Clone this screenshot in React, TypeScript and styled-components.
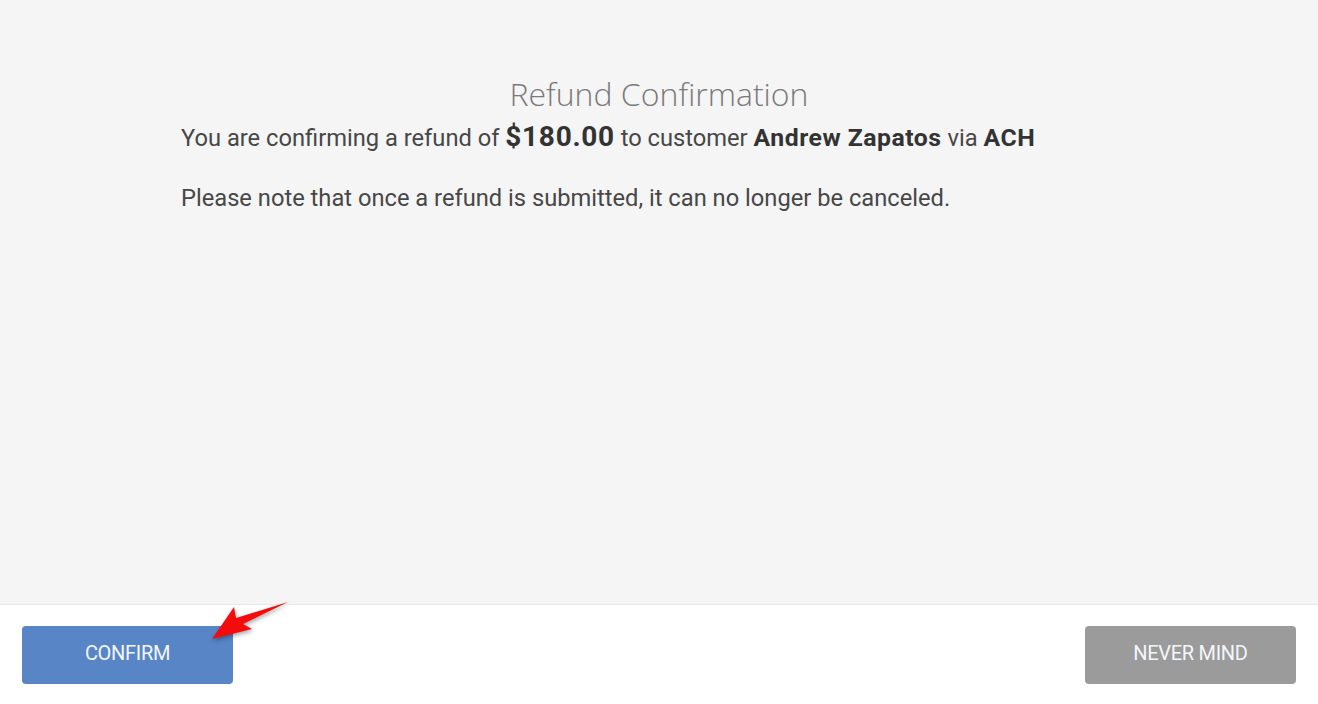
import React from "react";
import styled, { createGlobalStyle } from "styled-components";

const GlobalStyle = createGlobalStyle`
  html, body {
    margin: 0;
    padding: 0;
    background: #ffffff;
  }
  body {
    font-family: Roboto, "Open Sans", sans-serif;
  }
`;

export default function App() {
  return (
    <>
      <GlobalStyle />
      <Modal>
        <Body>
          <Title>Refund Confirmation</Title>
          <Text>
            You are confirming a refund of <Amount>$180.00</Amount> to customer{" "}
            <Strong>Andrew Zapatos</Strong> via <Strong>ACH</Strong>
          </Text>
          <Text $gap>
            Please note that once a refund is submitted, it can no longer be
            canceled.
          </Text>
        </Body>
        <Footer>
          <Button $color="#5785c6">CONFIRM</Button>
          <Button $color="#9b9b9b">NEVER MIND</Button>
          <Arrow viewBox="0 0 80 46" width="80" height="46">
            <polygon
              points="2,38 24,6 26,17 78,1 33,23 42,28"
              fill="#f40c0c"
            />
          </Arrow>
        </Footer>
      </Modal>
    </>
  );
}

const Modal = styled.div`
  display: flex;
  flex-direction: column;
  width: 1318px;
  height: 704px;
  overflow: hidden;
`;

const Body = styled.div`
  flex: 1;
  background: #f5f5f5;
  padding: 72px 181px 0;
  color: #444444;
`;

const Title = styled.h2`
  margin: 0;
  text-align: center;
  font-family: "Open Sans", sans-serif;
  font-size: 32px;
  font-weight: 300;
  line-height: 44px;
  color: #7a7a7a;
`;

const Text = styled.p<{ $gap?: boolean }>`
  margin: ${(p) => (p.$gap ? "30px" : "6px")} 0 0;
  font-size: 23.7px;
  line-height: 30px;
  color: #474747;
`;

const Amount = styled.strong`
  font-size: 28px;
  font-weight: 700;
  letter-spacing: 0.7px;
  color: #333333;
`;

const Strong = styled.strong`
  font-size: 24.8px;
  font-weight: 700;
  letter-spacing: 0.5px;
  color: #333333;
`;

const Footer = styled.div`
  position: relative;
  height: 100px;
  box-sizing: border-box;
  border-top: 1px solid #e8e8e8;
  background: #ffffff;
  display: flex;
  align-items: center;
  justify-content: space-between;
  padding: 0 22px;
`;

const Button = styled.button<{ $color: string }>`
  width: 211px;
  height: 58px;
  padding: 0 0 3px;
  border: none;
  border-radius: 4px;
  background: ${(p) => p.$color};
  color: #f4f6fa;
  font-family: Roboto, sans-serif;
  font-size: 20px;
  letter-spacing: -0.3px;
  cursor: pointer;
`;

const Arrow = styled.svg`
  position: absolute;
  left: 210px;
  top: -4px;
  filter: drop-shadow(1px 2px 2px rgba(0, 0, 0, 0.35));
`;
